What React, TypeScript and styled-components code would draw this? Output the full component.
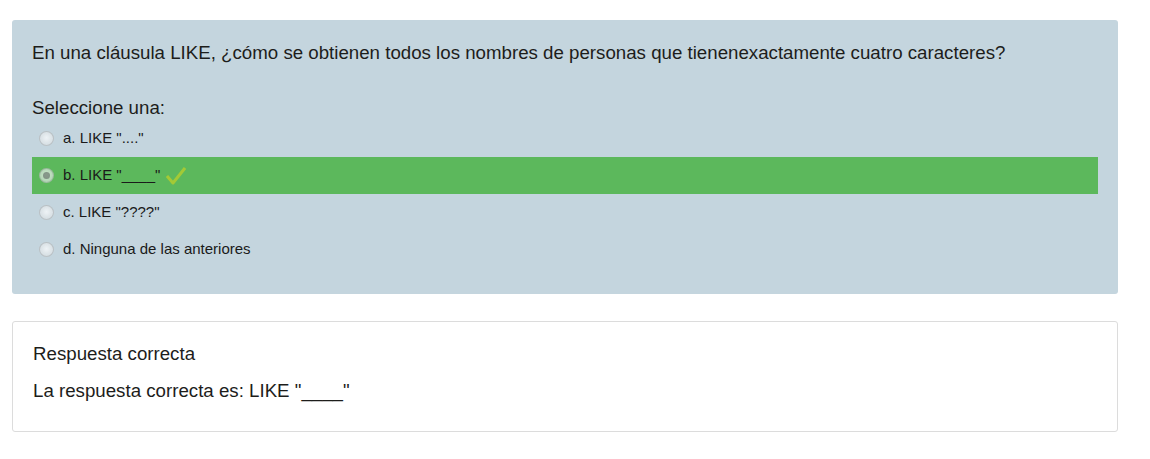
import React from "react";
import styled, { createGlobalStyle } from "styled-components";

const Global = createGlobalStyle`
  html, body { margin: 0; padding: 0; background: #fff; }
  body { font-family: "Liberation Sans", Arial, sans-serif; color: #1d1d1b; }
`;

const Page = styled.div`
  padding: 20px 32px 28px 12px;
  display: flex;
  flex-direction: column;
  gap: 27px;
`;

const QuestionPanel = styled.div`
  background: #c4d5de;
  border-radius: 3px;
  padding: 20px 20px 26px 20px;
`;

const QuestionText = styled.div`
  font-size: 18.7px;
  line-height: 25px;
  margin-bottom: 30px;
`;

const Prompt = styled.div`
  font-size: 18.7px;
  line-height: 25px;
  margin-bottom: 0;
`;

const Options = styled.div`
  display: flex;
  flex-direction: column;
`;

const Option = styled.div<{ $correct?: boolean }>`
  display: flex;
  align-items: center;
  height: 37px;
  padding-left: 7px;
  font-size: 15px;
  color: #1a1a1a;
  background: ${(p) => (p.$correct ? "#5cb85c" : "transparent")};
`;

const Radio = styled.span<{ $checked?: boolean }>`
  width: 15px;
  height: 15px;
  border-radius: 50%;
  box-sizing: border-box;
  border: 1px solid rgba(0, 0, 0, 0.14);
  background: radial-gradient(circle at 50% 45%, rgba(255,255,255,0.7), rgba(225,228,230,0.65) 70%);
  margin-right: 9px;
  display: flex;
  align-items: center;
  justify-content: center;
  flex-shrink: 0;
  &::after {
    content: "";
    display: ${(p) => (p.$checked ? "block" : "none")};
    width: 7px;
    height: 7px;
    border-radius: 50%;
    background: rgba(90, 100, 95, 0.6);
  }
`;

const Label = styled.span`
  display: inline-flex;
  align-items: center;
  margin-top: -2px;
`;

const Check = styled.svg`
  margin-left: 6px;
  margin-top: 2px;
`;

const Feedback = styled.div`
  border: 1px solid #dcdcdc;
  border-radius: 3px;
  padding: 19px 20px 28px 20px;
  font-size: 18.7px;
  line-height: 25px;
`;

const FeedbackLine = styled.div`
  & + & {
    margin-top: 12px;
  }
`;

const options = [
  { key: "a", text: 'a. LIKE "...."' },
  { key: "b", text: 'b. LIKE "____"', correct: true },
  { key: "c", text: 'c. LIKE "????"' },
  { key: "d", text: "d. Ninguna de las anteriores" },
];

export default function App() {
  return (
    <>
      <Global />
      <Page>
        <QuestionPanel>
          <QuestionText>
            En una cláusula LIKE, ¿cómo se obtienen todos los nombres de personas que tienenexactamente cuatro caracteres?
          </QuestionText>
          <Prompt>Seleccione una:</Prompt>
          <Options>
            {options.map((o) => (
              <Option key={o.key} $correct={o.correct}>
                <Radio $checked={o.correct} />
                <Label>
                  {o.text}
                  {o.correct && (
                    <Check width="20" height="19" viewBox="0 0 20 19">
                      <path d="M1 10 L7 17 L19 2" fill="none" stroke="#a3c936" strokeWidth="3" strokeLinejoin="round" />
                    </Check>
                  )}
                </Label>
              </Option>
            ))}
          </Options>
        </QuestionPanel>
        <Feedback>
          <FeedbackLine>Respuesta correcta</FeedbackLine>
          <FeedbackLine>La respuesta correcta es: LIKE "____"</FeedbackLine>
        </Feedback>
      </Page>
    </>
  );
}
